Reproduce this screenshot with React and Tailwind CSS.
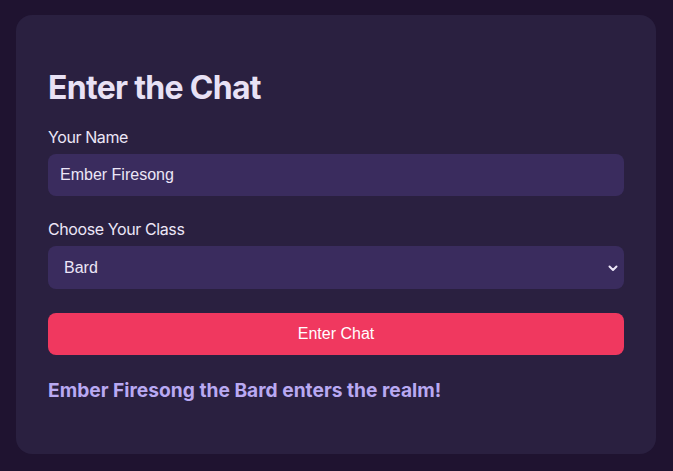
import React, { useState } from 'react';

const classes = ['Warrior', 'Mage', 'Rogue', 'Bard', 'Cleric'];

const App = () => {
  const [name, setName] = useState('Ember Firesong');
  const [role, setRole] = useState('Bard');

  return (
    <div className="min-h-screen w-full bg-[#1f1330] flex items-center pl-4 font-['Inter',sans-serif]">
      <div className="w-[640px] h-[439px] rounded-2xl bg-[#2a2040] px-8 pt-8 -mt-[2px]">
        <h1 className="mt-[21px] mb-[21px] text-[32px] leading-[39px] font-bold text-[#e8e1f5] tracking-[-0.7px]">
          Enter the Chat
        </h1>

        {/* Name */}
        <div className="mb-6">
          <label className="block mb-[7px] text-base leading-[19px] tracking-[-0.4px] text-[#ece6f7]">Your Name</label>
          <input
            value={name}
            onChange={(e) => setName(e.target.value)}
            className="w-full h-[42px] rounded-lg bg-[#3a2c5e] px-3 text-base text-[#ece6f7] font-['Liberation_Sans',sans-serif] outline-none"
          />
        </div>

        {/* Class */}
        <div className="mb-6">
          <label className="block mb-[7px] text-base leading-[19px] tracking-[-0.4px] text-[#ece6f7]">Choose Your Class</label>
          <div className="relative">
            <select
              value={role}
              onChange={(e) => setRole(e.target.value)}
              className="w-full h-[43px] appearance-none rounded-lg bg-[#3a2c5e] pl-4 pr-3 text-base text-[#ece6f7] font-['Liberation_Sans',sans-serif] outline-none"
            >
              {classes.map((c) => (
                <option key={c} value={c}>{c}</option>
              ))}
            </select>
            <svg className="pointer-events-none absolute right-[5px] top-1/2 -translate-y-1/2" width="12" height="12" viewBox="0 0 12 12">
              <path d="M2.5 4.5 L6 8 L9.5 4.5" fill="none" stroke="#ece6f7" strokeWidth="2" strokeLinecap="round" strokeLinejoin="round" />
            </svg>
          </div>
        </div>

        <button className="w-full h-[42px] rounded-lg bg-[#f0385f] text-base text-white font-['Liberation_Sans',sans-serif]">
          Enter Chat
        </button>

        <p className="mt-6 text-[19.2px] leading-[23px] font-bold text-[#b9a9f2]">
          {name} the {role} enters the realm!
        </p>
      </div>
    </div>
  );
};

export default App;
